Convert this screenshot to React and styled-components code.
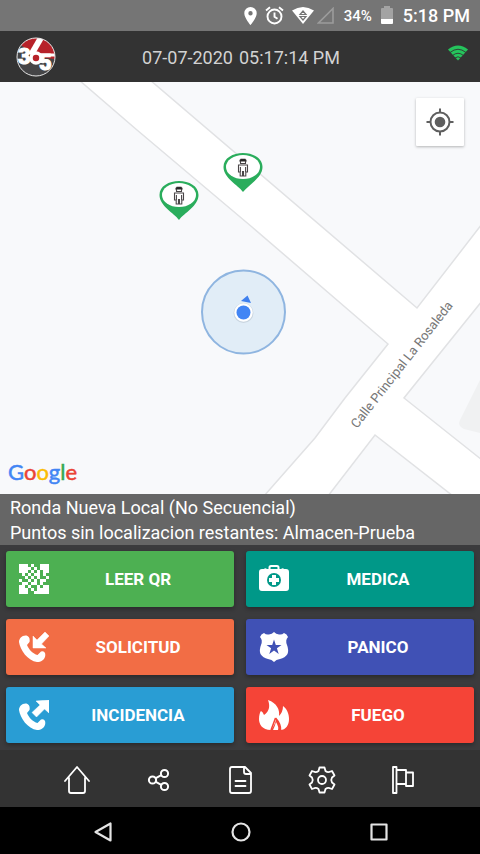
import React from "react";
import styled, { createGlobalStyle } from "styled-components";

const GlobalStyle = createGlobalStyle`
  * { box-sizing: border-box; }
  body { margin: 0; background: #000; font-family: Roboto, "Liberation Sans", sans-serif; }
  button { font: inherit; border: 0; margin: 0; padding: 0; background: none; color: inherit; cursor: pointer; }
  svg { display: block; }
`;

const Screen = styled.div`
  display: flex;
  flex-direction: column;
  min-height: 100vh;
`;

const StatusBar = styled.div`
  display: flex;
  align-items: center;
  justify-content: flex-end;
  height: 31px;
  padding-right: 10px;
  background: #757575;
  color: #fff;
`;

const StatusIcons = styled.div`
  display: flex;
  align-items: center;
  gap: 8px;
`;

const SignalPair = styled.div`
  display: flex;
  align-items: center;
  gap: 3px;
`;

const BatteryLevel = styled.span`
  margin: 0 9px 0 10px;
  font-size: 15px;
  font-weight: 500;
`;

const Clock = styled.span`
  margin-left: 10px;
  font-size: 18px;
  font-weight: 500;
`;

const Header = styled.header`
  display: grid;
  grid-template-columns: 1fr auto 1fr;
  align-items: center;
  height: 51px;
  padding: 0 12px 0 16px;
  background: #333;
  color: #d2d2d2;
`;

const Timestamp = styled.time`
  display: flex;
  gap: 6px;
  padding-top: 2px;
  padding-right: 2px;
  font-size: 18px;
  line-height: 24px;
`;

const Connection = styled.div`
  justify-self: end;
  align-self: start;
  padding-top: 14px;
`;

const MapView = styled.section`
  position: relative;
  flex: 1 0 auto;
  min-height: 412px;
  overflow: hidden;
  background: #f8f9fb;
`;

const MapDrawing = styled.svg`
  position: absolute;
  inset: 0;
  width: 100%;
  height: 100%;
`;

const StreetLabel = styled.text`
  font: 13px Roboto, "Liberation Sans", sans-serif;
  fill: #777;
`;

const LocateButton = styled.button`
  position: absolute;
  top: 16px;
  right: 16px;
  display: grid;
  place-items: center;
  width: 48px;
  height: 48px;
  background: #fff;
  border-radius: 1px;
  box-shadow: 0 1px 3px rgba(0, 0, 0, 0.28);
`;

const MapBrand = styled.div`
  position: absolute;
  left: 8px;
  bottom: 8px;
  font-family: Lato, Roboto, sans-serif;
  font-size: 22px;
  line-height: 28px;
  -webkit-text-stroke: 0.5px;
`;

const BrandLetter = styled.span`
  color: ${(p) => p.$color};
`;

const RoundInfo = styled.section`
  padding: 1px 10px 0;
  background: #666;
  color: #fff;
`;

const InfoLine = styled.p`
  margin: 0;
  font-size: 18px;
  line-height: 25px;
`;

const ActionGrid = styled.section`
  display: grid;
  grid-template-columns: 1fr 1fr;
  grid-auto-rows: 56px;
  gap: 12px;
  padding: 6px 6px 7px;
  background: #3b3b3d;
`;

const ActionButton = styled.button`
  display: flex;
  align-items: center;
  padding: 0 13px;
  border-radius: 3px;
  background: ${(p) => p.$color};
  color: #fff;
  box-shadow: 0 2px 4px rgba(0, 0, 0, 0.3);
`;

const ActionLabel = styled.span`
  flex: 1;
  padding-left: 6px;
  font-size: 17px;
  font-weight: 700;
  text-align: center;
`;

const TabBar = styled.nav`
  display: flex;
  height: 57px;
  padding: 0 36px;
  background: #333;
  color: #fff;
`;

const SystemBar = styled.nav`
  display: flex;
  height: 47px;
  padding: 0 33px;
  background: #000;
  color: #e4e4e4;
`;

const BarButton = styled.button`
  flex: 1;
  display: grid;
  place-items: center;
  padding-top: 3px;
`;

const LogoDigit = styled.text`
  font: 900 22px Roboto, "Liberation Sans", sans-serif;
  fill: #fff;
  stroke: #fff;
  stroke-width: 1;
`;

function Logo() {
  return (
    <svg width="40" height="40" viewBox="0 0 40 40" role="img" aria-label="365">
      <clipPath id="disc"><circle cx="20" cy="20" r="19" /></clipPath>
      <g clipPath="url(#disc)">
        <rect width="40" height="40" fill="#454547" />
        <path d="M6 0H40V22L20 20L5 8Z" fill="#b7222a" />
        <path d="M15 18L26 -1" stroke="#fff" strokeWidth="6" fill="none" />
        <path d="M24 18L40 18" stroke="#fff" strokeWidth="3" fill="none" />
      </g>
      <circle cx="20" cy="20" r="19" fill="none" stroke="#e8e8e8" />
      <circle cx="20" cy="21" r="5" fill="#b7222a" stroke="#fff" strokeWidth="3.500" />
      <LogoDigit x="2" y="27">3</LogoDigit>
      <LogoDigit x="23" y="33">5</LogoDigit>
    </svg>
  );
}

function WifiIcon() {
  return (
    <svg width="20" height="16" viewBox="0 0 20 16">
      <path d="M0 4.500Q10-3.500 20 4.500L10 15.500Z" fill="#25c45c" />
      <path d="M2 7.500Q10 1 18 7.500M4.500 10.500Q10 6 15.500 10.500M7 13Q10 10.500 13 13" fill="none" stroke="#333" strokeWidth="0.900" />
    </svg>
  );
}

function PlaceIcon() {
  return (
    <svg width="13" height="18" viewBox="0 0 13 18" fill="#fff">
      <path fillRule="evenodd" d="M6.500 0A6.200 6.200 0 0 0 .3 6.200C.3 11 6.500 18 6.500 18S12.700 11 12.700 6.200A6.200 6.200 0 0 0 6.500 0Zm0 4a2.200 2.200 0 1 1 0 4.400 2.200 2.200 0 0 1 0-4.400Z" />
    </svg>
  );
}

function AlarmIcon() {
  return (
    <svg width="19" height="19" viewBox="0 0 19 19" fill="none" stroke="#fff" strokeWidth="1.900">
      <circle cx="9.500" cy="10.500" r="7" />
      <path d="M1 4.600L5 1.300M18 4.600L14 1.300M9.500 6.500v4.300l3 2" />
    </svg>
  );
}

function StatusWifi() {
  return (
    <svg width="22" height="17" viewBox="0 0 22 17">
      <path d="M0 3.500Q11-3.500 22 3.500L11 17Z" fill="#fff" />
      <path d="M11 4L14 7.500H8ZM11 13L14 9.500H8Z" fill="none" stroke="#757575" strokeWidth="1.200" />
    </svg>
  );
}

function NoSignal() {
  return (
    <svg width="17" height="17" viewBox="0 0 17 17">
      <path d="M16 1.500V16H1.500Z" fill="none" stroke="#9c9c9c" strokeWidth="1.600" />
    </svg>
  );
}

function Battery() {
  return (
    <svg width="12" height="20" viewBox="0 0 12 20">
      <path d="M0 3Q0 2 1 2H3V0H9V2H11Q12 2 12 3V13H0Z" fill="#a3a3a3" />
      <path d="M0 13H12V17Q12 18 11 18H1Q0 18 0 17Z" fill="#fff" />
    </svg>
  );
}

function GuardPin({ x, y }) {
  return (
    <g transform={`translate(${x} ${y})`}>
      <path d="M0 39C-5 32-19.500 25-19.500 14C-19.500 5-10 0 0 0S19.500 5 19.500 14C19.500 25 5 32 0 39Z" fill="#2aad5c" />
      <ellipse cx="0" cy="14" rx="17" ry="12" fill="#fff" />
      <g fill="none" stroke="#4a4648" strokeWidth="1.100">
        <path d="M-2.500 8V10.500H2.500V8M-4.500 12H4.500V19H2.800V23H0.500V18.500H-0.500V23H-2.800V19H-4.500ZM-2.600 14V19M2.600 14V19" />
        <path d="M-3.500 8.200L-2.500 6H2.500L3.500 8.200Z" fill="#222" strokeWidth="0.600" />
      </g>
    </g>
  );
}

function StreetMap() {
  return (
    <MapDrawing viewBox="0 0 480 412" preserveAspectRatio="xMidYMid slice" role="img" aria-label="Mapa">
      <rect width="480" height="412" fill="#fff" />
      <g fill="#f8f9fb" stroke="#e1e2e4" strokeWidth="1.500">
        <path d="M-2-2H79L137 48L252 145L388 262L345 316L315 356L264 414H-2Z" />
        <path d="M150-2L417 226L482 142V-2Z" />
        <path d="M482 219L404 316L482 378Z" />
        <path d="M328 414L375 353L453 414Z" />
      </g>
      <path d="M480 298L460 338Q457 344 464 347L480 351Z" fill="#f0f1f2" />
      <StreetLabel transform="translate(357 347) rotate(-52)">Calle Principal La Rosaleda</StreetLabel>
      <GuardPin x={243} y={71} />
      <GuardPin x={179} y={99} />
      <circle cx="243.500" cy="230" r="41.500" fill="#e1edf7" stroke="#8fb5e0" strokeWidth="2" />
      <path d="M241 219L247.500 213.500L251 221Z" fill="#3f80ee" />
      <circle cx="243.500" cy="231" r="10" fill="#c9d5e0" />
      <circle cx="243.500" cy="230.500" r="9.200" fill="#fff" />
      <circle cx="243.500" cy="230.500" r="7" fill="#4285f4" />
    </MapDrawing>
  );
}

function LocateIcon() {
  return (
    <svg width="28" height="28" viewBox="0 0 28 28" fill="none" stroke="#5f5f5f" strokeWidth="2">
      <circle cx="14" cy="14" r="9.500" />
      <circle cx="14" cy="14" r="5.300" fill="#5f5f5f" stroke="none" />
      <path d="M14 0.500V5M14 23v4.500M0.500 14H5M23 14h4.500" />
    </svg>
  );
}

const QR_ROWS = [
  "###.#..###",
  "####.#.###",
  "###.#.#.##",
  ".#.#.##.#.",
  "..#.#.#..#",
  "#..#.#.##.",
  ".##.##.#..",
  "##.#..#.##",
  "###.#.####",
  "###..#####",
];

function QrIcon() {
  return (
    <svg width="30" height="30" viewBox="0 0 30 30" fill="#fff" shapeRendering="crispEdges">
      {QR_ROWS.flatMap((row, y) =>
        [...row].map((cell, x) =>
          cell === "#" ? <rect key={`${x}-${y}`} x={x * 3} y={y * 3} width="3" height="3" /> : null
        )
      )}
    </svg>
  );
}

function CallIcon({ outgoing }) {
  return (
    <svg width="30" height="30" viewBox="0 0 30 30" fill="#fff">
      <path d="M7.500 3.500C3 3 0 6.500 0 10C1 18 9 29 18 30C23 30.500 27.500 26 26 21Q25 18.500 22 19.500L18.500 23C14 22 9.500 17 8 13L10.500 10Q11.500 5 7.500 3.500Z" />
      <path
        d={outgoing
          ? "M30 0V13L25.500 9L17.500 17L13 12.500L21 5L17 1Z"
          : "M14 16V4L18 8L26 0L30 4L22.500 12L27 16Z"}
        strokeLinejoin="round" stroke="#fff" strokeWidth="0.500"
      />
    </svg>
  );
}

function MedicalIcon() {
  return (
    <svg width="30" height="30" viewBox="0 -1 30 30">
      <path d="M10.500 5V2.500Q10.500 1 12 1H18Q19.500 1 19.500 2.500V5" fill="none" stroke="#fff" strokeWidth="2" />
      <path d="M3 4H5Q6 2.500 8 4H22Q24 2.500 25 4H27Q30 4 30 7V23Q30 26 27 26H3Q0 26 0 23V7Q0 4 3 4Z" fill="#fff" />
      <circle cx="15" cy="15" r="7" fill="#009888" />
      <path d="M13 10H17V13H20V17H17V20H13V17H10V13H13Z" fill="#fff" />
    </svg>
  );
}

function BadgeIcon() {
  return (
    <svg width="30" height="30" viewBox="0 0 30 30">
      <path d="M15 0Q17 2 20 2.500Q23 3 25 1Q28 2 29 5Q26 8 28 13Q30 18 28.500 22Q26 26 21 27Q17 27.500 15 30Q13 27.500 9 27Q4 26 1.500 22Q0 18 2 13Q4 8 1 5Q2 2 5 1Q7 3 10 2.500Q13 2 15 0Z" fill="#fff" />
      <path d="M15 7.500L16.800 13H22.500L17.900 16.300L19.700 22L15 18.500L10.300 22L12.100 16.300L7.500 13H13.200Z" fill="#4051b5" />
    </svg>
  );
}

function FireIcon() {
  return (
    <svg width="30" height="31" viewBox="0 0 30 31" fill="#fff">
      <path d="M12 30C3 30 0 24 0 19C0 15 1 12 2 11Q4 12 5 15C11 11 11 5 9 0C18 3 21 10 20 16Q24 12 24 6C28 9 30 14 30 19C30 25 27 30 21 30Q22 24 17 18Q17 23 12 30Z" />
      <path d="M16.500 18Q14 25 12 30M16.500 18Q22 24 21.500 30" fill="none" stroke="#f54437" strokeWidth="1.500" />
      <path d="M14 30Q16 26 17 22Q20 27 19 30Z" />
    </svg>
  );
}

const Outline = ({ children, width = 1.8 }) => (
  <svg width="28" height="28" viewBox="0 0 28 28" fill="none" stroke="currentColor" strokeWidth={width} strokeLinecap="round" strokeLinejoin="round">
    {children}
  </svg>
);

const HomeIcon = () => (
  <Outline><path d="M2 15L14 1L26 15M6 12V25Q6 27 8 27H20Q22 27 22 25V12" /></Outline>
);

const ShareIcon = () => (
  <Outline width={2}>
    <circle cx="8.500" cy="14" r="3.600" /><circle cx="20.500" cy="7.500" r="3.600" /><circle cx="20.500" cy="20.500" r="3.600" />
    <path d="M11.800 12.200L17.300 9.200M11.800 15.800L17.300 18.800" />
  </Outline>
);

const DocumentIcon = () => (
  <Outline>
    <path d="M6 1H19L25 7V25Q25 27 23 27H6Q4 27 4 25V3Q4 1 6 1ZM18 1V6Q18 8 20 8H25M9.500 15H19.500M9.500 20H19.500" />
  </Outline>
);

const SettingsIcon = () => (
  <Outline>
    <path d="M11.500 1.500H16.500L17.500 5Q20 7 22.500 5.500L24 5L26.500 9.500L24 11.500Q22.500 14 24 16.500L26.500 18.500L24 23L22.500 22.500Q20 21 17.500 23L16.500 26.500H11.500L10.500 23Q8 21 5.500 22.500L4 23L1.500 18.500L4 16.500Q5.500 14 4 11.500L1.500 9.500L4 5L5.500 5.500Q8 7 10.500 5Z" />
    <circle cx="14" cy="14" r="4" />
  </Outline>
);

const FlagIcon = () => (
  <Outline width={1.8}>
    <path d="M4 1H7.500V27H4ZM7.500 4H17V18H7.500M17 6.500H24V20H17V18" />
  </Outline>
);

const BackIcon = () => <Outline width={2.2}><path d="M22.500 5.500V22.500L7.500 14Z" /></Outline>;
const CircleIcon = () => <Outline width={2.2}><circle cx="15" cy="14" r="8.500" /></Outline>;
const SquareIcon = () => <Outline width={2.2}><path d="M7.500 6.500H22.500V21.500H7.500Z" /></Outline>;

const ACTIONS = [
  { label: "LEER QR", color: "#4db052", icon: <QrIcon /> },
  { label: "MEDICA", color: "#009888", icon: <MedicalIcon /> },
  { label: "SOLICITUD", color: "#f26d45", icon: <CallIcon /> },
  { label: "PANICO", color: "#4051b5", icon: <BadgeIcon /> },
  { label: "INCIDENCIA", color: "#299dd4", icon: <CallIcon outgoing /> },
  { label: "FUEGO", color: "#f54437", icon: <FireIcon /> },
];

const TABS = [
  { label: "Inicio", icon: <HomeIcon /> },
  { label: "Compartir", icon: <ShareIcon /> },
  { label: "Documentos", icon: <DocumentIcon /> },
  { label: "Ajustes", icon: <SettingsIcon /> },
  { label: "Bandera", icon: <FlagIcon /> },
];

const SYSTEM_KEYS = [
  { label: "Atrás", icon: <BackIcon /> },
  { label: "Pantalla principal", icon: <CircleIcon /> },
  { label: "Recientes", icon: <SquareIcon /> },
];

const BRAND = [
  ["G", "#4285f4"], ["o", "#ea4335"], ["o", "#fbbc05"],
  ["g", "#4285f4"], ["l", "#34a853"], ["e", "#ea4335"],
];

export default function App() {
  return (
    <Screen>
      <GlobalStyle />
      <StatusBar>
        <StatusIcons>
          <PlaceIcon />
          <AlarmIcon />
          <SignalPair><StatusWifi /><NoSignal /></SignalPair>
        </StatusIcons>
        <BatteryLevel>34%</BatteryLevel>
        <Battery />
        <Clock>5:18 PM</Clock>
      </StatusBar>
      <Header>
        <Logo />
        <Timestamp dateTime="2020-07-07T17:17:14">
          <span>07-07-2020</span>
          <span>05:17:14 PM</span>
        </Timestamp>
        <Connection><WifiIcon /></Connection>
      </Header>
      <MapView>
        <StreetMap />
        <LocateButton aria-label="Mi ubicación"><LocateIcon /></LocateButton>
        <MapBrand>
          {BRAND.map(([letter, color], i) => <BrandLetter key={i} $color={color}>{letter}</BrandLetter>)}
        </MapBrand>
      </MapView>
      <RoundInfo>
        <InfoLine>Ronda Nueva Local (No Secuencial)</InfoLine>
        <InfoLine>Puntos sin localizacion restantes: Almacen-Prueba</InfoLine>
      </RoundInfo>
      <ActionGrid>
        {ACTIONS.map(({ label, color, icon }) => (
          <ActionButton key={label} $color={color}>
            {icon}
            <ActionLabel>{label}</ActionLabel>
          </ActionButton>
        ))}
      </ActionGrid>
      <TabBar>
        {TABS.map(({ label, icon }) => <BarButton key={label} aria-label={label}>{icon}</BarButton>)}
      </TabBar>
      <SystemBar>
        {SYSTEM_KEYS.map(({ label, icon }) => <BarButton key={label} aria-label={label}>{icon}</BarButton>)}
      </SystemBar>
    </Screen>
  );
}
